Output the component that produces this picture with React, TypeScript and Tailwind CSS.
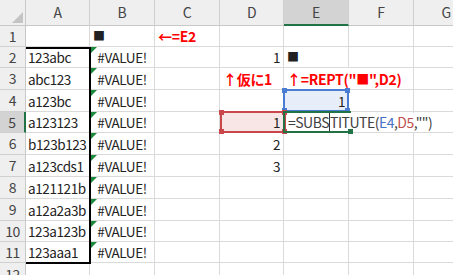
import React from 'react';

const columns = ['A', 'B', 'C', 'D', 'E', 'F', 'G'];
const rowNumbers = [1, 2, 3, 4, 5, 6, 7, 8, 9, 10, 11, 12];

const samples = [
  '123abc',
  'abc123',
  'a123bc',
  'a123123',
  'b123b123',
  'a123cds1',
  'a121121b',
  'a12a2a3b',
  '123a123b',
  '123aaa1',
];

type Cell = {
  text: React.ReactNode;
  align?: 'left' | 'center' | 'right';
  className?: string;
  spill?: boolean;
  errorMark?: boolean;
};

const red = 'font-bold text-[14px] text-[#ff0000] tracking-[-0.3px]';

const cells: Record<string, Cell> = {
  B1: { text: '■', className: 'text-[12px]' },
  C1: { text: '←=E2', className: red },
  D2: { text: '1', align: 'right' },
  E2: { text: '■', className: 'text-[12px]' },
  D3: { text: '↑仮に1', className: red },
  E3: {
    text: (
      <>
        ↑=REPT("<span className="text-[13px]">■</span>",D2)
      </>
    ),
    className: red,
    spill: true,
  },
  E4: { text: '1', align: 'right', className: 'bg-[#e8eef9]' },
  D5: { text: '1', align: 'right', className: 'bg-[#f8e6e6]' },
  E5: {
    text: (
      <span className="relative z-10 -ml-[1px] flex h-[19px] items-center bg-white pl-[2px] pr-[4px] text-[14px] tracking-[-0.5px] text-[#404040]">
        =SUBS
        <span className="inline-block h-[21px] w-px bg-[#333]" />
        TITUTE(<span className="text-[#4472c4]">E4</span>,<span className="text-[#c0504d]">D5</span>,"")
      </span>
    ),
    spill: true,
  },
  D6: { text: '2', align: 'right' },
  D7: { text: '3', align: 'right' },
};

samples.forEach((value, i) => {
  cells[`A${i + 2}`] = { text: value, className: 'pl-[2px]' };
  cells[`B${i + 2}`] = { text: '#VALUE!', align: 'center', errorMark: true };
});

const alignClass = {
  left: 'justify-start',
  center: 'justify-center',
  right: 'justify-end',
};

const Corner = () => (
  <div className="relative border-r border-b border-[#c8c8c8] bg-[#efefef]">
    <svg className="absolute left-[12px] top-[12px]" width="11" height="11" viewBox="0 0 11 11">
      <polygon points="11,0 11,11 0,11" fill="#c4c4c4" />
    </svg>
  </div>
);

const CornerDots = ({ color }: { color: string }) => (
  <>
    <span className={`absolute -left-[3px] -top-[3px] h-[5px] w-[5px] ${color}`} />
    <span className={`absolute -right-[3px] -top-[3px] h-[5px] w-[5px] ${color}`} />
    <span className={`absolute -bottom-[3px] -left-[3px] h-[5px] w-[5px] ${color}`} />
    <span className={`absolute -bottom-[3px] -right-[3px] h-[5px] w-[5px] ${color}`} />
  </>
);

const gridTemplate =
  'grid grid-cols-[26px_64px_65px_65px_64px_65px_65px_65px] grid-rows-[26px_21px_21px_22px_22px_21px_22px_22px_22px_22px_21px_21px_24px]';

export default function App() {
  return (
    <div className="h-[275px] w-[453px] overflow-hidden bg-white font-['Noto_Sans_CJK_JP','Noto_Sans',sans-serif] text-[13.5px] tracking-[-0.4px] text-[#222]">
      <div className="grid">
        {/* cells */}
        <div className={`${gridTemplate} col-start-1 row-start-1`}>
          <Corner />
          {columns.map((col) => (
            <div
              key={col}
              className={`flex items-center justify-center border-r border-[#d0d0d0] text-[14px] text-[#444] ${
                col === 'E'
                  ? 'border-b-2 border-b-[#217346] bg-[#d3d3d3] text-[#2d6a47]'
                  : 'border-b border-b-[#c8c8c8] bg-[#efefef]'
              }`}
            >
              {col}
            </div>
          ))}

          {rowNumbers.map((row) => (
            <React.Fragment key={row}>
              <div
                className={`flex items-center justify-center border-b border-[#d0d0d0] text-[14px] text-[#444] ${
                  row === 5
                    ? 'border-r-2 border-r-[#217346] bg-[#d3d3d3] text-[#2d6a47]'
                    : 'border-r border-r-[#c8c8c8] bg-[#efefef]'
                }`}
              >
                {row}
              </div>
              {columns.map((col) => {
                const cell = cells[`${col}${row}`];
                return (
                  <div
                    key={col}
                    className={`relative flex items-center whitespace-nowrap border-b border-[#dadada] px-[3px] leading-[20px] ${
                      cell?.spill ? 'overflow-visible' : 'border-r'
                    } ${alignClass[cell?.align ?? 'left']} ${cell?.className ?? ''}`}
                  >
                    {cell?.errorMark && (
                      <svg className="absolute left-[1px] top-0" width="6" height="6" viewBox="0 0 6 6">
                        <polygon points="0,0 6,0 0,6" fill="#1e8a3c" />
                      </svg>
                    )}
                    {cell?.text}
                  </div>
                );
              })}
            </React.Fragment>
          ))}
        </div>

        {/* borders and reference boxes drawn over the cells */}
        <div className={`${gridTemplate} pointer-events-none relative z-20 col-start-1 row-start-1`}>
          <div className="col-start-2 row-start-3 row-end-13 -mr-px -mb-px border-t-2 border-r-2 border-b-2 border-black" />
          <div className="relative col-start-6 row-start-5 -ml-px -mt-px border-2 border-[#4a7dd1]">
            <CornerDots color="bg-[#4a7dd1]" />
          </div>
          <div className="relative col-start-5 row-start-6 -mt-px -mr-[2px] border-2 border-[#c9474b]">
            <CornerDots color="bg-[#c9474b]" />
          </div>
          <div className="relative col-start-6 row-start-6 -mt-px -ml-px -mr-[2px] border-t-2 border-l-2 border-b-2 border-[#217346]">
            <span className="absolute -bottom-[3px] -right-[2px] h-[5px] w-[5px] bg-[#217346]" />
          </div>
        </div>
      </div>
    </div>
  );
}
